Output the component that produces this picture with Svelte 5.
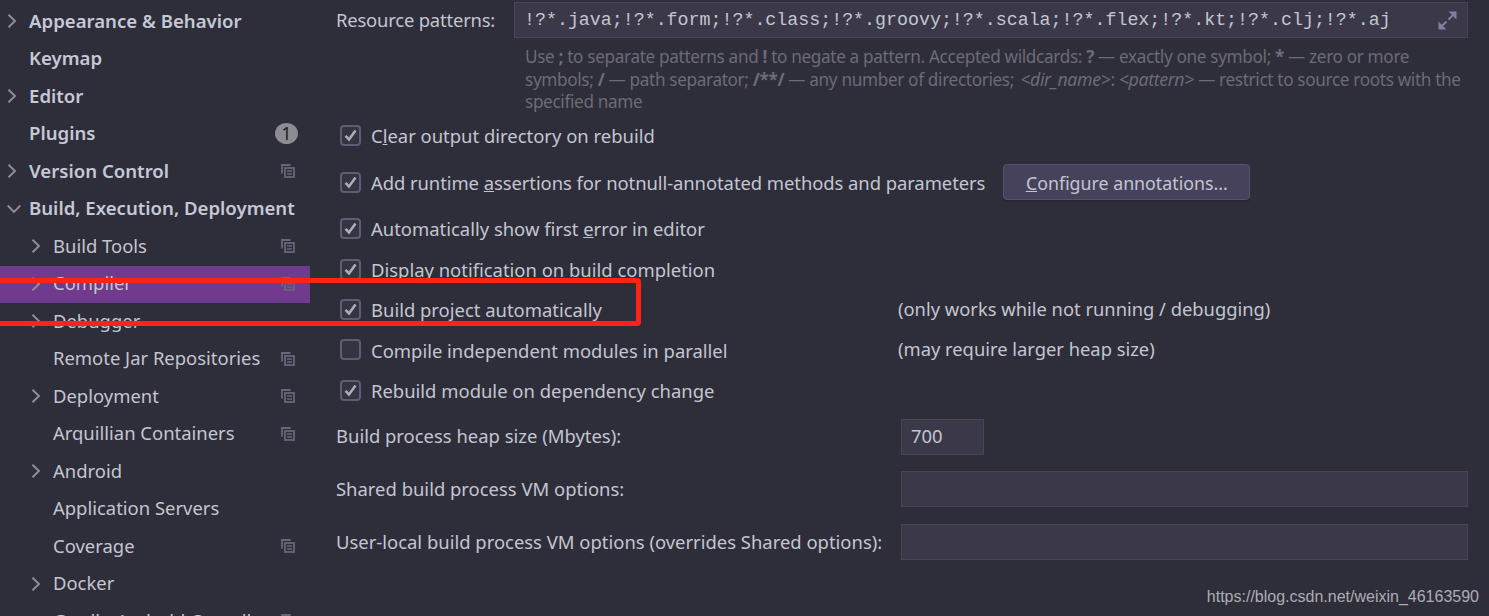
<script lang="ts">
	const nav = [
		{ label: 'Appearance & Behavior', bold: true, arrow: 'right' },
		{ label: 'Keymap', bold: true },
		{ label: 'Editor', bold: true, arrow: 'right' },
		{ label: 'Plugins', bold: true, badge: '1' },
		{ label: 'Version Control', bold: true, arrow: 'right', copy: true },
		{ label: 'Build, Execution, Deployment', bold: true, arrow: 'down' },
		{ label: 'Build Tools', arrow: 'right', copy: true },
		{ label: 'Compiler', arrow: 'right', copy: true, selected: true },
		{ label: 'Debugger', arrow: 'right' },
		{ label: 'Remote Jar Repositories', copy: true },
		{ label: 'Deployment', arrow: 'right', copy: true },
		{ label: 'Arquillian Containers', copy: true },
		{ label: 'Android', arrow: 'right' },
		{ label: 'Application Servers' },
		{ label: 'Coverage', copy: true },
		{ label: 'Docker', arrow: 'right' },
		{ label: 'Gradle-Android Compiler', copy: true }
	]
</script>

{#snippet check(on)}
	<span class="box">
		{#if on}
			<svg width="13" height="13" viewBox="0 0 13 13"><path d="M1.5 6.8 L5 10.5 L11.5 1.5" fill="none" stroke="#acabb7" stroke-width="2.6"/></svg>
		{/if}
	</span>
{/snippet}

<div class="page">
	<aside class="sidebar">
		{#each nav as item}
			<div class="nav-row" class:selected={item.selected} class:bold={item.bold}>
				<span class="arrow" class:child={!item.bold}>
					{#if item.arrow === 'right'}
						<svg width="12" height="14" viewBox="0 0 12 14"><path d="M1.5 0.7 L8 7 L1.5 13.3" fill="none" stroke="#8f8f95" stroke-width="1.9"/></svg>
					{:else if item.arrow === 'down'}
						<svg width="14" height="12" viewBox="0 0 14 12"><path d="M0.7 2.5 L7 8.8 L13.3 2.5" fill="none" stroke="#8f8f95" stroke-width="1.9"/></svg>
					{/if}
				</span>
				<span class="nav-label">{item.label}</span>
				{#if item.badge}
					<span class="badge">{item.badge}</span>
				{/if}
				{#if item.copy}
					<svg class="copy" width="14" height="14" viewBox="0 0 14 14">
						<path d="M9.5 1 H1 V9.5" fill="none" stroke="#686679" stroke-width="1.8"/>
						<rect x="4" y="4" width="9" height="9" fill="none" stroke="#686679" stroke-width="1.8"/>
						<path d="M6 7 H11 M6 10 H11" stroke="#686679" stroke-width="1.3"/>
					</svg>
				{/if}
			</div>
		{/each}
	</aside>

	<main class="settings">
		<div class="field top">
			<span class="field-label resource">Resource patterns:</span>
			<div class="input patterns">
				<span>!?*.java;!?*.form;!?*.class;!?*.groovy;!?*.scala;!?*.flex;!?*.kt;!?*.clj;!?*.aj</span>
				<svg width="19" height="19" viewBox="0 0 19 19">
					<path d="M10.5 0.5 H18.5 V8.5 Z" fill="#837ea3"/>
					<path d="M0.5 10.5 V18.5 H8.5 Z" fill="#837ea3"/>
					<path d="M15 4 L10.5 8.5 M4 15 L8.5 10.5" stroke="#837ea3" stroke-width="1.8"/>
				</svg>
			</div>
		</div>

		<p class="hint">Use <b>;</b> to separate patterns and <b>!</b> to negate a pattern. Accepted wildcards: <b>?</b> — exactly one symbol; <b>*</b> — zero or more<br>symbols; <b>/</b> — path separator; <b>/**/</b> — any number of directories; &nbsp;<i class="dir">&lt;dir_name&gt;</i>: <i>&lt;pattern&gt;</i> — restrict to source roots with the<br>specified name</p>

		<div class="check-row clear">{@render check(true)}<span>C<u>l</u>ear output directory on rebuild</span></div>
		<div class="check-row gap7">
			{@render check(true)}<span class="long">Add runtime <u>a</u>ssertions for notnull-annotated methods and parameters</span>
			<button class="configure"><u>C</u>onfigure annotations...</button>
		</div>
		<div class="check-row gap6">{@render check(true)}<span>Automatically show first <u>e</u>rror in editor</span></div>
		<div class="check-row gap1">{@render check(true)}<span>Display notification on build completion</span></div>
		<div class="check-row">
			{@render check(true)}<span class="wide">Build project automatically</span>
			<span class="note">(only works while not running / debugging)</span>
		</div>
		<div class="check-row">
			{@render check(false)}<span class="wide low">Compile independent modules in parallel</span>
			<span class="note">(may require larger heap size)</span>
		</div>
		<div class="check-row gap1">{@render check(true)}<span>Rebuild module on dependency change</span></div>

		<div class="field heap">
			<span class="field-label">Build process heap size (Mbytes):</span>
			<div class="input small"><span>700</span></div>
		</div>
		<div class="field vm">
			<span class="field-label">Shared build process VM options:</span>
			<div class="input grow"></div>
		</div>
		<div class="field vm user">
			<span class="field-label">User-local build process VM options (overrides Shared options):</span>
			<div class="input grow"></div>
		</div>
	</main>

	<!-- red annotation drawn over the screenshot -->
	<div class="annotation"></div>
	<span class="watermark">https://blog.csdn.net/weixin_46163590</span>
</div>

<style>
	:global(body) {
		margin: 0;
		background: #2e2d3a;
	}

	.page {
		position: relative;
		display: flex;
		width: 1489px;
		height: 616px;
		overflow: hidden;
		background: #2e2d3a;
		color: #c3c6d0;
		font-family: "Noto Sans", sans-serif;
		font-size: 18.45px;
	}

	.sidebar {
		flex: 0 0 310px;
		padding-top: 3px;
	}

	.nav-row {
		display: flex;
		align-items: center;
		height: 37.5px;
		box-sizing: border-box;
		padding-right: 12px;
		padding-bottom: 1.5px;
		white-space: nowrap;
	}

	.nav-row.selected {
		background: #703a8e;
	}

	.nav-label {
		margin-bottom: 2px;
	}

	.nav-row.bold .nav-label {
		font-size: 18.6px;
		font-weight: 600;
		color: #c5c9d6;
	}

	.arrow {
		display: flex;
		flex: 0 0 29px;
		padding-left: 7px;
		box-sizing: border-box;
	}

	.arrow.child {
		flex-basis: 53px;
		padding-left: 31px;
	}

	.copy {
		margin-left: auto;
		margin-right: 3px;
	}

	.badge {
		margin-left: auto;
		width: 23px;
		height: 21px;
		border-radius: 50%;
		background: #8c8c92;
		color: #1f1f26;
		font-size: 18px;
		line-height: 21px;
		text-align: center;
	}

	.settings {
		flex: 1;
		padding: 2px 21px 0 26px;
		min-width: 0;
	}

	.field {
		display: flex;
		align-items: center;
		height: 36px;
	}

	.field-label {
		flex: 0 0 565px;
		margin-bottom: 2px;
		white-space: nowrap;
	}

	.field-label.resource {
		flex-basis: 178px;
		letter-spacing: -0.2px;
	}

	.heap {
		margin-top: 8px;
	}

	.heap .field-label {
		margin-bottom: 4px;
	}

	.vm {
		margin-top: 16px;
	}

	.user {
		margin-top: 17px;
	}

	.input {
		height: 36px;
		box-sizing: border-box;
		background: #3a3849;
		border: 1px solid #474659;
		display: flex;
		align-items: center;
	}

	.input.grow {
		flex: 1;
	}

	.input.small {
		width: 83px;
		padding-left: 9px;
	}

	.input.small span {
		margin-bottom: 4px;
	}

	.patterns {
		flex: 1;
		justify-content: space-between;
		padding: 0 10px 0 9px;
		font-family: "Liberation Mono", monospace;
		font-size: 18.3px;
	}

	.hint {
		margin: 8px 0 0 189px;
		color: #6c6b76;
		font-size: 17.2px;
		letter-spacing: -0.35px;
		line-height: 22px;
		white-space: nowrap;
	}

	.hint i {
		font-size: 17.7px;
	}

	.hint .dir {
		margin-left: -2px;
	}

	.check-row {
		display: flex;
		align-items: center;
		height: 40px;
		padding-left: 4px;
		white-space: nowrap;
	}

	.check-row span:not(.box) {
		margin-bottom: 2px;
	}

	.check-row span.low {
		margin-bottom: 0;
	}

	.check-row span.note {
		margin-bottom: 4px;
		font-size: 18.35px;
	}

	.clear {
		margin-top: 3px;
	}

	.gap7 {
		margin-top: 7px;
	}

	.gap6 {
		margin-top: 6px;
	}

	.gap1 {
		margin-top: 1px;
	}

	.box {
		flex: 0 0 auto;
		display: flex;
		align-items: center;
		justify-content: center;
		width: 21px;
		height: 21px;
		margin-right: 10px;
		margin-bottom: 2px;
		box-sizing: border-box;
		border: 2px solid #5f5c76;
		border-radius: 4px;
		background: #353442;
	}

	.long {
		letter-spacing: -0.07px;
	}

	.wide {
		flex: 0 0 527px;
	}

	.configure {
		margin-left: 18px;
		margin-bottom: 2px;
		width: 247px;
		height: 36px;
		padding: 2px 0 0;
		background: #46425c;
		border: 1px solid #56536b;
		border-radius: 4px;
		color: inherit;
		font: inherit;
		font-size: 17.8px;
		box-shadow: 0 2px 0 #272630;
	}

	.annotation {
		position: absolute;
		left: -10px;
		top: 278px;
		width: 651px;
		height: 48px;
		box-sizing: border-box;
		border: 5px solid #ff2216;
		border-radius: 4px;
	}

	.watermark {
		position: absolute;
		right: 10px;
		top: 587px;
		color: #adadb2;
		font-family: "Liberation Sans", sans-serif;
		font-size: 16px;
		line-height: 20px;
	}
</style>
